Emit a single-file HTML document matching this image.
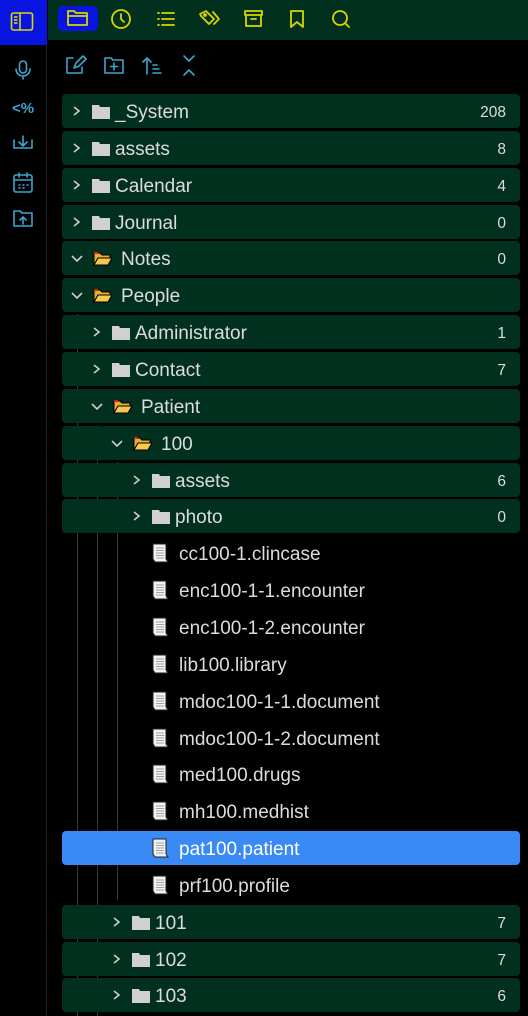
<!DOCTYPE html>
<html><head><meta charset="utf-8"><style>
*{margin:0;padding:0;box-sizing:border-box}
body{width:528px;height:1016px;background:#000;overflow:hidden;font-family:"Liberation Sans",sans-serif;position:relative}
.side{position:absolute;left:0;top:0;width:47px;height:1016px;background:#000;border-right:1px solid #222}
.sbtop{position:absolute;left:0;top:0;width:47px;height:45px;background:#0a14e0}
.top{position:absolute;left:48px;top:0;width:480px;height:40px;background:#01301f}
.ic{position:absolute}
.row{position:absolute;left:62px;width:458px;height:34px;border-radius:4px;color:#dcdcdc;font-size:19px;line-height:34px}
.g{background:#01301f}
.sel{background:#3a8af5;color:#fff}
.row span.t{position:absolute;top:2px}
.cnt{position:absolute;right:14px;top:2px;font-size:15.5px;color:#dcdcdc}
.vl{position:absolute;width:1px;background:#3a3a3a}
</style></head><body>
<div class="side"></div>
<div class="sbtop"></div>
<svg class="ic" style="left:10px;top:11px" width="24" height="22" viewBox="0 0 24 22" fill="none" stroke="#d6d600" stroke-width="1.6"><rect x="1.5" y="2" width="21" height="17" rx="2"/><line x1="10" y1="2" x2="10" y2="19"/><line x1="4" y1="6" x2="7.5" y2="6"/><line x1="4" y1="9" x2="7.5" y2="9"/><line x1="4" y1="12" x2="7.5" y2="12"/></svg>
<svg class="ic" style="left:11px;top:58px" width="24" height="180" viewBox="0 0 22 180" fill="none" stroke="#3aa6d0" stroke-width="1.6" stroke-linecap="round" stroke-linejoin="round">
<rect x="7.5" y="3" width="7" height="12" rx="3.5"/><path d="M4 11a7 7 0 0 0 14 0M11 18v3"/>
<text x="0" y="55" fill="#3aa6d0" stroke="none" font-family="Liberation Sans" font-weight="bold" font-size="15">&lt;%</text>
<path d="M2 82v8h18v-8M11 78v10M7 84l4 4 4-4"/>
<rect x="2" y="117" width="18" height="17" rx="2"/><path d="M2 122h18M7 115v4M15 115v4M7 127h1M11 127h1M15 127h1M7 130h1M11 130h1"/>
<path d="M2 153h6l2 2h10v13H2z M11 166v-7M8 162l3-3 3 3"/>
</svg>
<div class="top"></div>
<div style="position:absolute;left:58px;top:6px;width:40px;height:25px;background:#0a14e0;border-radius:5px"></div>
<svg class="ic" style="left:58px;top:0" width="300" height="40" viewBox="58 0 300 40" fill="none" stroke="#d6d600" stroke-width="1.8" stroke-linecap="round" stroke-linejoin="round">
<path d="M68 11h6l2 2h11v12H68z M68 16h19"/>
<circle cx="121" cy="19" r="9"/><path d="M121 14v5l3 3"/>
<path d="M158 13h1M158 19h1M158 25h1M162 13h12M162 19h12M162 25h12"/>
<path d="M200 14l6-3 8 8-5 5-8-8z M213 12l6 7-5 5"/><circle cx="205" cy="15" r="1"/>
<rect x="245" y="11" width="17" height="4"/><path d="M246 15v11h15V15M251 19h5"/>
<path d="M291 11h12v16l-6-5-6 5z"/>
<circle cx="340" cy="18" r="7"/><path d="M345 23l4 4"/>
</svg>
<svg class="ic" style="left:64px;top:54px" width="140" height="24" viewBox="64 54 140 24" fill="none" stroke="#3aa6d0" stroke-width="1.6" stroke-linecap="round" stroke-linejoin="round">
<path d="M73 58h-6v15h15v-6 M74 68l2-5 7-7 3 3-7 7z"/>
<path d="M105 58h6l2 2h10v13h-18z M114 63v7M110.5 66.5h7"/>
<path d="M147 74V58M143 62l4-4 4 4M153 65h4M153 69h6M153 73h8"/>
<path d="M184 56l5 5 5-5M184 75l5-5 5 5"/>
</svg>

<div class="vl" style="left:77px;top:314px;height:702px"></div>
<div class="vl" style="left:97px;top:425px;height:591px"></div>
<div class="vl" style="left:117px;top:462px;height:438px"></div>

<div id="tree"></div>
<script>
const F='<svg width="18" height="15" viewBox="0 0 18 15" style="position:absolute;top:10px"><path d="M0 1h7l1 2h10v12H0z" fill="#d0d0d0"/></svg>';
const O='<svg width="20" height="14" viewBox="0 0 20 14" style="position:absolute;top:11px"><path d="M1 1h6l2 2h8v3H5L1 13z" fill="#e8b030" stroke="#000" stroke-width="1"/><path d="M1 1h4" stroke="#e02020" stroke-width="2"/><path d="M5 6h14l-4 7H1z" fill="#f8c850" stroke="#000" stroke-width="1"/></svg>';
const D='<svg width="18" height="20" viewBox="0 0 18 20" style="position:absolute;top:7px"><path d="M1 1h13v15l2 3H3l-2-3z" fill="#f2f2f2" stroke="#222" stroke-width="1"/><path d="M4 5h8M4 7.5h8M4 10h8M4 12.5h8M4 15h8" stroke="#888" stroke-width="0.8"/></svg>';
const R='<svg width="10" height="12" viewBox="0 0 10 12" style="position:absolute;top:11px"><path d="M2 2l5 4-5 4" fill="none" stroke="#ccc" stroke-width="1.6"/></svg>';
const Dn='<svg width="12" height="10" viewBox="0 0 12 10" style="position:absolute;top:13px"><path d="M1 2l5 5 5-5" fill="none" stroke="#ccc" stroke-width="1.6"/></svg>';
const rows=[["_System",0,"c","208"],["assets",0,"c","8"],["Calendar",0,"c","4"],["Journal",0,"c","0"],["Notes",0,"o","0"],["People",0,"o",""],["Administrator",1,"c","1"],["Contact",1,"c","7"],["Patient",1,"o",""],["100",2,"o",""],["assets",3,"c","6"],["photo",3,"c","0"],["cc100-1.clincase",3,"f"],["enc100-1-1.encounter",3,"f"],["enc100-1-2.encounter",3,"f"],["lib100.library",3,"f"],["mdoc100-1-1.document",3,"f"],["mdoc100-1-2.document",3,"f"],["med100.drugs",3,"f"],["mh100.medhist",3,"f"],["pat100.patient",3,"f","","sel"],["prf100.profile",3,"f"],["101",2,"c","7"],["102",2,"c","7"],["103",2,"c","6"]];
let h='';
rows.forEach((r,i)=>{const y=94+i*36.85;const [n,l,t,c,s]=r;const cx=10+l*20;
let cls=t=='f'?(s||''):'g';let inner='';
if(t=='c'){inner=R.replace('position:absolute','position:absolute;left:'+(cx)+'px')+F.replace('position:absolute','position:absolute;left:'+(cx+20)+'px')+'<span class="t" style="left:'+(cx+43)+'px">'+n+'</span>';}
else if(t=='o'){inner=Dn.replace('position:absolute','position:absolute;left:'+(cx-1)+'px')+O.replace('position:absolute','position:absolute;left:'+(cx+21)+'px')+'<span class="t" style="left:'+(cx+49)+'px">'+n+'</span>';}
else{inner=D.replace('position:absolute','position:absolute;left:'+(cx+20)+'px')+'<span class="t" style="left:'+(cx+47)+'px">'+n+'</span>';}
if(c)inner+='<span class="cnt">'+c+'</span>';
h+='<div class="row '+cls+'" style="top:'+y.toFixed(1)+'px">'+inner+'</div>';});
document.getElementById('tree').innerHTML=h;
</script>
</body></html>
